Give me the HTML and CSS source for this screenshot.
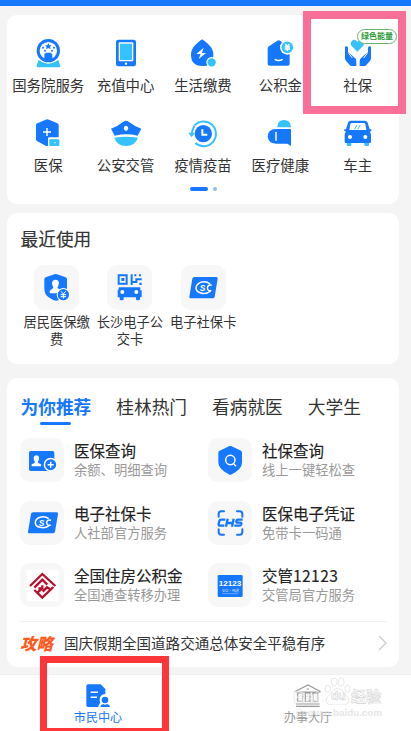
FILE: index.html
```html
<!DOCTYPE html>
<html lang="zh-CN">
<head>
<meta charset="utf-8">
<title>市民中心</title>
<link rel="stylesheet" href="styles.css">
</head>
<body>
<div class="screen">
  <header class="topbar"></header>
  <main class="content">
    <section class="card apps">
      <div class="app-grid">
        <div class="app">
          <svg class="app-icon" viewBox="96 111 96 96"><path class="c" d="M115 180q30 18 60 0l6 17q0 5-6 5h-60q-6 0-5-5z"/><circle class="w" cx="145" cy="152" r="39"/><circle class="b" cx="145" cy="152" r="35"/><circle class="w" cx="145" cy="152" r="26"/><path class="b" d="M145 129l3 7 7 0-5 5 2 7-7-4-7 4 2-7-5-5 7 0zM133 162l6-4h12l6 4v18h-24z"/><g class="b"><circle cx="129" cy="143" r="3"/><circle cx="162" cy="143" r="3"/><circle cx="135" cy="152" r="3"/><circle cx="156" cy="152" r="3"/></g></svg>
          <span>国务院服务</span>
        </div>
        <div class="app">
          <svg class="app-icon" viewBox="329 111 96 96"><rect class="b" x="347" y="119" width="60" height="80" rx="7"/><rect class="w" x="355" y="127" width="44" height="57" rx="3"/><rect class="c" x="359" y="131" width="36" height="49"/><circle class="w" cx="377" cy="191" r="3.5"/></svg>
          <span>充值中心</span>
        </div>
        <div class="app">
          <svg class="app-icon" viewBox="561 111 96 96"><path class="b" d="M606 118q8 4 19 15q15 14 15 31q0 34-34 34q-33-1-33-34q0-17 15-31q11-11 18-15z"/><path class="w" d="M611 143l-22 19h13l-6 15 22-18h-12z"/><circle class="w" cx="635" cy="187" r="16"/><circle class="c" cx="635" cy="187" r="12.5"/></svg>
          <span>生活缴费</span>
        </div>
        <div class="app">
          <svg class="app-icon" viewBox="793 111 96 96"><path class="b" d="M804 146q0-4 4-7l25-17q4-2 8 0l29 18v51q0 6-6 6h-54q-6 0-6-6z"/><path class="sw" d="M825 178q12 7 24 0"/><circle class="w" cx="863" cy="142" r="22"/><circle class="c" cx="863" cy="142" r="17.5"/><path class="sw" d="M857 132l6 8 6-8M855 141h16M855 147h16M863 140v13"/></svg>
          <span>公积金</span>
        </div>
        <div class="app">
          <svg class="app-icon" viewBox="1026 111 96 96"><path class="c" d="M1072 155l-17-17q-6-9 1-16 9-6 16 3 7-9 16-3 7 7 1 16z"/><path class="b" d="M1035 140q7-4 9 3v14l15 12q10 7 10 15v14h-17l-13-14q-4-4-4-9zM1113 140q-7-4-9 3v14l-15 12q-10 7-10 15v14h17l13-14q4-4 4-9z"/><path class="sw thin" d="M1046 160l11 14M1102 160l-11 14"/></svg>
          <span>社保</span>
          <em class="tag">绿色能量</em>
        </div>
        <div class="app">
          <svg class="app-icon" viewBox="96 351 96 96"><path class="b" d="M137 359q5-3 10 0l25 11q4 2 4 6v45q0 4-4 6l-26 10q-5 2-9 0l-25-13q-4-2-4-6v-42q0-4 4-6z"/><path class="sw" d="M141 384v24M129 396h24"/><path class="w" d="M144 416q0-4 4-4h34v30h-38z"/><rect class="c" x="148" y="418" width="30" height="20" rx="3"/><circle class="w" cx="165" cy="428" r="2"/></svg>
          <span>医保</span>
        </div>
        <div class="app">
          <svg class="app-icon" viewBox="329 351 96 96"><path class="b" d="M332 386q18-6 37-21 8-5 16 0 18 14 38 21l-11 21q-33-8-69 0z"/><ellipse class="w" cx="377" cy="385" rx="6.500" ry="8"/><path class="c" d="M342 413q35-6 71 0-9 25-36 25t-35-25z"/></svg>
          <span>公安交管</span>
        </div>
        <div class="app">
          <svg class="app-icon" viewBox="561 351 96 96"><circle class="b" cx="610" cy="401" r="26"/><path class="sw wide" d="M607 388v16h15"/><path class="sc" d="M583 377A37 37 0 1 1 586 429M575 407q0-16 8-29"/><path class="c" d="M565 398h20l-10 14z"/></svg>
          <span>疫情疫苗</span>
        </div>
        <div class="app">
          <svg class="app-icon" viewBox="793 351 96 96"><path class="c" d="M833 382q0-22 20-22t21 22z"/><path class="b" d="M829 387h45v51l-11-7h-34q-24-1-25-22 1-21 25-22z"/><path class="sw" d="M829 396v26"/></svg>
          <span>医疗健康</span>
        </div>
        <div class="app">
          <svg class="app-icon" viewBox="1026 351 96 96"><path class="c" d="M1040 425h14v10q0 3-3 3h-8q-3 0-3-3zM1093 425h14v10q0 3-3 3h-8q-3 0-3-3z"/><path class="b" d="M1052 362h43q6 0 8 6l6 20h3q3 0 3 3t-6 4q4 4 4 11v19q0 4-4 4h-71q-4 0-4-4v-19q0-7 4-11-6-1-6-4t3-3h3l6-20q2-6 8-6z"/><path class="w" d="M1055 369h37q3 0 4 4l3 17h-51l3-17q1-4 4-4z"/><path class="scn" d="M1063 388l8-13M1073 388l8-13"/><circle class="w" cx="1050" cy="411" r="6"/><circle class="w" cx="1096" cy="411" r="6"/></svg>
          <span>车主</span>
        </div>
      </div>
      <div class="pager"><i class="pager-on"></i><i class="pager-dot"></i></div>
    </section>

    <section class="card recent">
      <h2>最近使用</h2>
      <div class="recent-list">
        <div class="recent-item">
          <svg class="recent-icon" viewBox="102 135 135 135"><path class="b" d="M163 163q4-2 8 0l26 9q4 2 4 6v28q0 18-10 27-11 8-23 9-10-1-22-10-13-10-13-26v-28q0-4 4-6z"/><path class="w" d="M167 179q9 0 10 10-1 9-5 13 1 5 12 8v10h-34q-4-6 1-9 8-4 9-9-4-5-4-13 1-10 11-10z"/><circle class="w" cx="190" cy="224" r="20"/><circle class="b" cx="190" cy="224" r="17"/><path class="sw thin" d="M183 214l7 8 7-8M182 224h16M182 230h16M190 222v14"/></svg>
          <span>居民医保缴费</span>
        </div>
        <div class="recent-item">
          <svg class="recent-icon" viewBox="322 135 135 135"><path class="sb" d="M357 166h24v25h-24z"/><path class="b" d="M365 174h9v9h-9zM393 163h6v20h8v-8h19v6h-13v8h-14v6h-6zM404 163h6v6h-6zM418 163h6v6h-6zM419 188h7v7h-7zM358 202h64v9q4-2 4 2v19h-5v5q0 4-4 4h-4q-4 0-4-4v-5h-37v5q0 4-4 4h-4q-4 0-4-4v-5h-6v-19q0-4 2-2z"/><circle class="w" cx="368" cy="216" r="6"/><circle class="w" cx="410" cy="216" r="6"/></svg>
          <span>长沙电子公交卡</span>
        </div>
        <div class="recent-item">
          <svg class="recent-icon" viewBox="542 135 135 135"><path class="b" d="M583 171h65q5 0 4 5l-9 54q-1 5-6 5h-66q-5 0-4-5l9-54q1-5 7-5z"/><path class="sw" d="M629 192q-11-10-28-5-14 6-14 17t14 15q16 5 30-6"/><text class="mark" x="598" y="213">S</text><path class="sw" d="M634 196q-12-3-13 8 1 11 12 7"/></svg>
          <span>电子社保卡</span>
        </div>
      </div>
    </section>

    <section class="card services">
      <nav class="tabs"><b class="tab active">为你推荐</b><span class="tab">桂林热门</span><span class="tab">看病就医</span><span class="tab">大学生</span></nav>
      <div class="service-grid">
        <div class="service">
          <svg class="service-icon" viewBox="60 203 132 132"><rect class="b" x="87" y="242" width="76" height="60" rx="5"/><path class="w" d="M109 255q8 0 8 9 0 7-4 11 1 4 10 7v6H95v-6q9-3 10-7-4-4-4-11 0-9 8-9z"/><circle class="w" cx="152" cy="283" r="21"/><circle class="b" cx="152" cy="283" r="16.500"/><path class="sw" d="M152 274v18M143 283h18"/></svg>
          <div><h3>医保查询</h3><p>余额、明细查询</p></div>
        </div>
        <div class="service">
          <svg class="service-icon" viewBox="10 203 132 132"><path class="b" d="M73 228q4-2 8 0l28 13q3 2 3 6v30q0 21-35 37-35-16-36-37v-30q0-4 4-6z"/><circle class="sw" cx="77" cy="269" r="14"/><path class="sw" d="M85 278l9 10"/></svg>
          <div><h3>社保查询</h3><p>线上一键轻松查</p></div>
        </div>
        <div class="service">
          <svg class="service-icon" viewBox="60 32 132 132"><path class="b" d="M99 66h71q5 0 4 5l-9 53q-1 5-6 5H88q-5 0-4-5l9-53q1-5 6-5z"/><path class="sw" d="M146 85q-11-9-26-4-14 5-14 16t14 14q15 4 27-5"/><text class="mark" x="116" y="106">S</text><path class="sw" d="M153 90q-12-3-13 7 1 11 12 7"/></svg>
          <div><h3>电子社保卡</h3><p>人社部官方服务</p></div>
        </div>
        <div class="service">
          <svg class="service-icon" viewBox="10 32 132 132"><path class="sb round" d="M42 79v-8q0-8 8-8h8M97 63h8q8 0 8 8v8M113 117v8q0 8-8 8h-8M58 133h-8q-8 0-8-8v-8"/><path class="chs" d="M62 88H49q-4 0-5 4l-2 9q-1 5 4 5h13M69 85l-5 24M87 85l-5 24M66 98h18M114 88H100q-4 0-5 4-1 5 4 5h7q5 0 4 5-1 4-6 4H89"/></svg>
          <div><h3>医保电子凭证</h3><p>免带卡一码通</p></div>
        </div>
        <div class="service">
          <svg class="service-icon" viewBox="60 216 132 132"><path class="w" d="M80 237h96v94H80z"/><path class="fund" d="M90 285l37-36 39 36M103 290l24-24 15 15M115 292h12v-9M103 297l24 23 33-32M128 302l13-13 8 5M114 303l12-10"/></svg>
          <div><h3>全国住房公积金</h3><p>全国通查转移办理</p></div>
        </div>
        <div class="service">
          <svg class="service-icon" viewBox="10 216 132 132"><rect class="b" x="39" y="252" width="75" height="66" rx="4"/><text class="num" x="42" y="286" textLength="68" lengthAdjust="spacingAndGlyphs">12123</text><text class="tiny" x="51" y="302" textLength="52">安全·畅通</text><path class="faint" d="M53 308h46"/></svg>
          <div><h3>交管<span class="digits">12123</span></h3><p>交管局官方服务</p></div>
        </div>
      </div>
      <div class="guide">
        <strong>攻略</strong><span>国庆假期全国道路交通总体安全平稳有序</span>
        <svg class="chevron" viewBox="0 0 9 16"><path d="M1 1l7 7-7 7"/></svg>
      </div>
    </section>
  </main>

  <footer class="tabbar">
    <div class="tabbar-item on">
      <svg class="tabbar-icon" viewBox="252 219 84 75"><path class="b" d="M264 223h38l14 14v15q-17 1-17 18 0 5 2 8-6 5-6 13h-31q-5 0-5-5v-57q0-6 5-6z"/><path class="sw" d="M272 247h22M272 262h19"/><circle class="w" cx="315" cy="270" r="15"/><circle class="b" cx="315" cy="270" r="10"/><path class="b" d="M301 291q1-8 9-9 5 4 11 0 8 1 9 9z"/></svg>
      <span>市民中心</span>
    </div>
    <div class="tabbar-item">
      <svg class="tabbar-icon" viewBox="268 219 84 75"><path class="hall" d="M273 244l37-19 36 19v2h-73zM279 249h15v25h-15zM302 249h14v25h-14zM325 249h14v25h-14zM274 282h71M274 289h71M306 237h7"/></svg>
      <span>办事大厅</span>
    </div>
  </footer>

  <div class="watermark">
    <svg class="paw" viewBox="0 0 78 84"><g><ellipse cx="10" cy="35" rx="8" ry="11"/><ellipse cx="29" cy="15" rx="9" ry="12"/><ellipse cx="50" cy="15" rx="9" ry="12"/><ellipse cx="69" cy="35" rx="8" ry="11"/><path d="M39 34q12 0 20 15 16 14 14 25-4 13-34 10-30 3-34-10-2-11 14-25 8-15 20-15z"/></g></svg>
    <span class="wm-bai">Bai</span><span class="wm-du">du</span><span class="wm-cn">经验</span><span class="wm-url">jingyan.baidu.com</span>
  </div>
  <div class="mark-box mark-pink"></div>
  <div class="mark-box mark-red"></div>
</div>
</body>
</html>
```
FILE: styles.css
```css
* { box-sizing: border-box; }
body {
  margin: 0;
  background: #f4f4f4;
  color: #333;
  font-family: "Noto Sans CJK SC", "Noto Sans", sans-serif;
}
h2, h3, p { margin: 0; font-weight: 400; }
svg { display: block; flex: none; }
.screen {
  position: relative;
  width: 411px;
  height: 731px;
  overflow: hidden;
  display: flex;
  flex-direction: column;
}
.topbar { height: 5.5px; background: #1677ff; flex: none; }
.content { flex: 1; padding: 9.500px 12px 0 7px; display: flex; flex-direction: column; }
.card { background: #fff; border-radius: 10px; flex: none; }

/* icon paints */
.b { fill: #1677ff; }
.c { fill: #36c1ff; }
.w { fill: #fff; }
.sw { fill: none; stroke: #fff; stroke-width: 4.500; }
.wide { stroke-width: 6; }
.thin { stroke-width: 3; }
.sc { fill: none; stroke: #36c1ff; stroke-width: 6; }
.scn { fill: none; stroke: #36c1ff; stroke-width: 3; }
.sb { fill: none; stroke: #1677ff; stroke-width: 6; }
.round { stroke-linecap: round; }
.chs { fill: none; stroke: #1677ff; stroke-width: 7; }
.fund { fill: none; stroke: #b80f2e; stroke-width: 7; }
.faint { stroke: #8dbcff; stroke-width: 2; }
.mark { font: italic 700 25px "Liberation Sans", sans-serif; fill: #fff; }
.num { font: 700 20px "Liberation Sans", sans-serif; fill: #fff; }
.tiny { font-size: 11px; fill: #b9d6ff; }

.apps { height: 189px; padding: 22px 2.5px 0; }
.app-grid { display: grid; grid-template-columns: repeat(5, 77.4px); grid-auto-rows: 80px; }
.app { position: relative; display: flex; flex-direction: column; align-items: center; }
.app-icon { width: 32px; height: 32px; }
.app span { margin-top: 5px; font-size: 14.4px; line-height: 22px; white-space: nowrap; }
.tag {
  position: absolute;
  left: 38px;
  top: -8px;
  width: 40px;
  height: 14.5px;
  border: 1px solid #67b56f;
  border-radius: 8px;
  background: #fff;
  color: #279a36;
  font: 700 8px/12px "Noto Sans CJK SC", sans-serif;
  display: flex;
  justify-content: center;
  white-space: nowrap;
}
.pager { display: flex; justify-content: center; align-items: center; gap: 5px; margin-top: -10px; height: 4px; }
.pager-on { width: 18px; height: 3.500px; border-radius: 2px; background: #1677ff; }
.pager-dot { width: 4px; height: 4px; border-radius: 50%; background: #8dbcff; }

.recent { height: 151px; margin-top: 9px; padding: 12px 13.5px 0; }
.recent h2 { font-size: 17.7px; line-height: 26px; -webkit-text-stroke: 0.15px #333; }
.recent-list { display: flex; margin: 14px 0 0 -0.5px; }
.recent-item { width: 73.3px; display: flex; flex-direction: column; align-items: center; font-size: 13.3px; line-height: 17px; text-align: center; }
.recent-icon { width: 45px; height: 45px; border-radius: 10px; background: #f7f7f7; margin-bottom: 3px; }
.recent-item span { width: 68px; }

.services { height: 288.5px; margin-top: 14px; padding: 0 12px 0 13px; }
.tabs { display: flex; gap: 25px; padding: 15px 0 0 0.5px; height: 60px; font-size: 17.7px; line-height: 26px; white-space: nowrap; }
.tab.active { color: #1677ff; font-weight: 700; display: flex; flex-direction: column; align-items: center; }
.tab.active::after { content: ""; width: 31px; height: 2.600px; margin-top: 3px; border-radius: 2px; background: #1677ff; }
.service-grid { display: grid; grid-template-columns: 188px 180px; grid-template-rows: 62.5px 62px 58.5px; }
.service { display: flex; gap: 10px; white-space: nowrap; }
.service-icon { width: 44px; height: 44px; border-radius: 10px; background: #f7f7f7; }
.service h3 { margin-top: 1px; font-size: 15.5px; line-height: 22px; color: #222; -webkit-text-stroke: 0.15px #222; }
.service p { font-size: 13.3px; line-height: 17px; color: #999; }
.digits { letter-spacing: 0.45px; }
.guide { height: 45px; padding-bottom: 2.5px; border-top: 1px solid #f0f0f0; display: flex; align-items: center; font-size: 14.53px; white-space: nowrap; }
.guide strong { width: 44px; color: #ff5a1f; font-size: 16.5px; font-weight: 900; font-style: italic; }
.chevron { width: 9px; height: 16px; margin-left: auto; fill: none; stroke: #ccc; stroke-width: 1.3; }

.tabbar { height: 57.5px; flex: none; background: #fff; border-top: 1px solid #f0f0f0; display: flex; }
.tabbar-item { width: 210px; padding: 8.500px 14px 0 0; display: flex; flex-direction: column; align-items: center; font-size: 12.1px; line-height: 17px; color: #999; flex: none; }
.tabbar-item.on { color: #1677ff; }
.tabbar-item span { margin-top: -0.5px; }
.tabbar-icon { width: 28px; height: 25px; }
.hall { fill: none; stroke: #999; stroke-width: 3.6; }

/* overlays */
.mark-box { position: absolute; }
.mark-pink { left: 303px; top: 11px; width: 103px; height: 103px; border: 8px solid #f87097; }
.mark-red { left: 40px; top: 656px; width: 129px; height: 79px; border: 7px solid #ff3639; }
.watermark { position: absolute; left: 293px; top: 676px; width: 100px; height: 46px; font-family: "Liberation Sans", "Noto Sans CJK SC", sans-serif; font-weight: 700; color: #fff; -webkit-text-stroke: 0.6px #d4d4d4; }
.watermark span { position: absolute; line-height: 20px; }
.paw { position: absolute; left: 31px; top: 1px; width: 27px; height: 28px; fill: #fff; stroke: #ddd; stroke-width: 2; }
.wm-bai { left: 0; top: 12px; font-size: 17px; opacity: .65; }
.wm-du { left: 38px; top: 10px; font-size: 12px; }
.wm-cn { left: 58px; top: 11px; font-size: 15px; }
.wm-url { left: 3px; top: 27px; font-size: 9.8px; opacity: .75; -webkit-text-stroke: 0; color: #ddd; }
```
